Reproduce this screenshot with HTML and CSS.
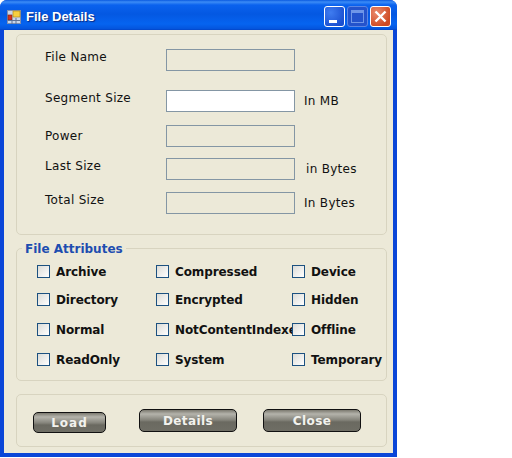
FILE: index.html
```html
<!DOCTYPE html>
<html lang="en">
<head>
<meta charset="utf-8">
<title>File Details</title>
<link rel="stylesheet" href="styles.css">
</head>
<body>
<div class="window">
  <header class="titlebar">
    <svg class="app-icon" width="14" height="14" viewBox="0 0 14 14">
      <rect x="0.5" y="0.5" width="13" height="13" fill="#c9d6ea" stroke="#7f8fb0"/>
      <rect x="1" y="5" width="4" height="5" fill="#d8301c" stroke="#7a2a20" stroke-width="0.7"/>
      <rect x="6" y="1" width="7" height="6" fill="#f7cf3f" stroke="#b08a20" stroke-width="0.7"/>
      <path d="M1 10.500h12M5 10v4M9 8v6" stroke="#5f7397" fill="none"/>
    </svg>
    <span class="title">File Details</span>
    <div class="controls">
      <span class="ctl ctl-min"><i class="min-glyph"></i></span>
      <span class="ctl ctl-max"><i class="max-glyph"></i></span>
      <span class="ctl ctl-close">
        <svg width="15" height="15" viewBox="0 0 15 15"><path d="M2.500 2.500l10 10M12.500 2.500l-10 10" stroke="#fff" stroke-width="2.400" fill="none"/></svg>
      </span>
    </div>
  </header>
  <main class="client">
    <section class="group group-form">
      <div class="row row-1"><label>File Name</label><span class="field"></span></div>
      <div class="row row-2"><label>Segment Size</label><span class="field field-on"></span><span class="unit">In MB</span></div>
      <div class="row row-3"><label>Power</label><span class="field"></span></div>
      <div class="row row-4"><label>Last Size</label><span class="field"></span><span class="unit unit-shift">in Bytes</span></div>
      <div class="row row-5"><label>Total Size</label><span class="field"></span><span class="unit">In Bytes</span></div>
    </section>
    <section class="group group-attrs">
      <h2 class="legend">File Attributes</h2>
      <div class="checks">
        <div class="check"><i class="box"></i><span>Archive</span></div>
        <div class="check"><i class="box"></i><span>Compressed</span></div>
        <div class="check"><i class="box"></i><span>Device</span></div>
        <div class="check"><i class="box"></i><span>Directory</span></div>
        <div class="check"><i class="box"></i><span>Encrypted</span></div>
        <div class="check"><i class="box"></i><span>Hidden</span></div>
        <div class="check"><i class="box"></i><span>Normal</span></div>
        <div class="check"><i class="box"></i><span class="clip">NotContentIndexed</span></div>
        <div class="check"><i class="box"></i><span>Offline</span></div>
        <div class="check"><i class="box"></i><span>ReadOnly</span></div>
        <div class="check"><i class="box"></i><span>System</span></div>
        <div class="check"><i class="box"></i><span>Temporary</span></div>
      </div>
    </section>
    <section class="group group-buttons">
      <button class="btn btn-load">Load</button>
      <button class="btn btn-details">Details</button>
      <button class="btn btn-close">Close</button>
    </section>
  </main>
</div>
</body>
</html>
```
FILE: styles.css
```css
* { box-sizing: border-box; }
html, body { margin: 0; padding: 0; background: #fff; }
body { width: 512px; height: 458px; overflow: hidden; font-family: "DejaVu Sans", sans-serif; }

.window {
  width: 397px;
  height: 457px;
  display: flex;
  flex-direction: column;
  background: #0a46d8;
  border-radius: 7px 7px 0 0;
  overflow: hidden;
}

.titlebar {
  height: 30px;
  flex: none;
  display: flex;
  align-items: center;
  padding: 3px 6px 0 7px;
  background: linear-gradient(to bottom, #0a5ae0 0, #3c8cf6 2px, #0a62ee 5px, #0458e2 14px, #0664f0 24px, #0454dc 29px, #0340c0 30px);
}
.app-icon { flex: none; }
.title {
  margin-left: 5px;
  color: #fff;
  font-family: "Liberation Sans", sans-serif;
  font-weight: 700;
  font-size: 13px;
  text-shadow: 1px 1px 1px #0a2a80;
}
.controls { margin-left: auto; display: flex; gap: 2px; margin-top: -1px; }
.ctl {
  width: 21px;
  height: 21px;
  border: 1px solid #fff;
  border-radius: 3px;
  display: flex;
  align-items: center;
  justify-content: center;
  position: relative;
  background: radial-gradient(circle at 30% 30%, #3f7cf0, #1a4fd0 80%);
}
.ctl-max { border-color: #5c86e4; background: #2453cc; }
.ctl-close { background: radial-gradient(circle at 30% 30%, #ea8a6e, #cf4a22 75%); }
.min-glyph { position: absolute; left: 4px; bottom: 3px; width: 8px; height: 3px; background: #fff; }
.max-glyph { width: 13px; height: 13px; border: 1px solid #6f96e8; border-top-width: 3px; }

.client {
  flex: none;
  height: 423px;
  margin: 0 4px;
  padding: 4px 6px 0 12px;
  background: #ece9d8;
  display: flex;
  flex-direction: column;
}

.group { border: 1px solid #d8d4c0; border-radius: 5px; position: relative; flex: none; }
.group-form { height: 201px; }
.group-attrs { height: 133px; margin-top: 13px; }
.group-buttons { height: 53px; margin-top: 13px; }

.row { position: relative; display: flex; align-items: flex-start; height: 22px; font-size: 12px; color: #111; letter-spacing: 0.3px; }
.row label { width: 121px; margin-left: 28px; flex: none; line-height: 14px; }
.row-1 { margin-top: 14px; }
.row-2 { margin-top: 19px; }
.row-3 { margin-top: 13px; }
.row-4 { margin-top: 11px; }
.row-5 { margin-top: 12px; }
.row-1 label { margin-top: 1px; }
.row-2 label { margin-top: 1px; }
.row-3 label { margin-top: 4px; }
.row-4 label { margin-top: 1px; }
.row-5 label { margin-top: 1px; }

.field { width: 129px; height: 22px; flex: none; border: 1px solid #8496a4; background: #ece9d8; }
.field-on { background: #fff; }
.unit { margin-left: 9px; margin-top: 4px; line-height: 14px; }
.unit-shift { margin-left: 11px; }

.legend {
  position: absolute;
  left: 5px;
  top: -7px;
  margin: 0;
  padding: 0 3px;
  background: #ece9d8;
  color: #1d4db0;
  font-size: 12px;
  font-weight: 700;
  line-height: 14px;
}
.checks {
  display: grid;
  grid-template-columns: 119px 136px 1fr;
  grid-template-rows: 28px 30px 30px 30px;
  padding: 8px 0 0 20px;
}
.check {
  display: flex;
  align-items: flex-start;
  padding-top: 8px;
  font-size: 12px;
  font-weight: 700;
  line-height: 13px;
  color: #111;
  min-width: 0;
  letter-spacing: -0.1px;
}
.check span { margin-top: 1px; }
.box {
  width: 13px;
  height: 13px;
  flex: none;
  margin-right: 6px;
  border: 1px solid #1c5180;
  background: linear-gradient(135deg, #dcdcd7, #fff);
}
.clip { overflow: hidden; white-space: nowrap; width: 119px; flex: none; }

.group-buttons { display: flex; align-items: flex-start; }
.btn {
  height: 23px;
  padding: 0;
  border: 1px solid #111;
  border-radius: 5px;
  color: #f2f2ee;
  font: 700 12px "DejaVu Sans", sans-serif;
  letter-spacing: 0.4px;
  background: linear-gradient(to bottom, #7c7a70 0, #b4b3ab 4px, #85847b 10px, #6a6960 12px, #6f6e65 100%);
}
.btn-load { width: 73px; height: 21px; margin: 17px 0 0 16px; letter-spacing: 1px; }
.btn-details { width: 98px; margin: 14px 0 0 33px; }
.btn-close { width: 98px; margin: 14px 0 0 26px; }
```
